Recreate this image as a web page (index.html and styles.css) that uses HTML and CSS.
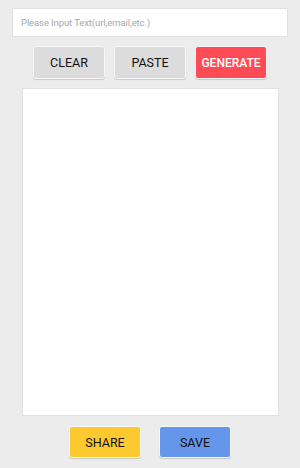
FILE: index.html
```html
<!DOCTYPE html>
<html>
<head>
    <meta charset="UTF-8">
    <title>QR Generator</title>
    <link rel="stylesheet" href="styles.css">
</head>
<body>
    <div id="app">
        <input id="text" type="text" placeholder="Please Input Text(url,email,etc.)">
        <div class="row top">
            <button class="btn gray">CLEAR</button>
            <button class="btn gray">PASTE</button>
            <button class="btn red">GENERATE</button>
        </div>
        <div id="result"></div>
        <div class="row bottom">
            <button class="btn yellow">SHARE</button>
            <button class="btn blue">SAVE</button>
        </div>
    </div>
</body>
</html>
```
FILE: styles.css
```css
body {
    margin: 0;
    background: #ececec;
    font-family: Roboto, "Noto Sans", sans-serif;
}

#app {
    width: 300px;
    height: 468px;
    display: flex;
    flex-direction: column;
    align-items: center;
    padding-top: 8px;
    box-sizing: border-box;
}

#text {
    width: 276px;
    height: 29px;
    box-sizing: border-box;
    border: 1px solid #e2e2e2;
    background: #fff;
    padding: 0 8px;
    font-family: Roboto, sans-serif;
    font-size: 9.5px;
    letter-spacing: -0.1px;
    color: #333;
    outline: none;
}

#text::placeholder {
    color: #a8a8a8;
}

.row {
    display: flex;
    justify-content: center;
}

.row.top {
    margin-top: 9px;
    gap: 9px;
}

.row.bottom {
    margin-top: 10px;
    gap: 18px;
}

.btn {
    width: 72px;
    height: 33px;
    border: 1px solid #f8f8f8;
    border-radius: 3px;
    box-shadow: 0 1px 1px rgba(0, 0, 0, 0.15);
    font-family: Roboto, sans-serif;
    font-size: 12.5px;
    color: #111;
    padding: 0;
}

.btn.gray {
    background: #dcdcdc;
}

.btn.red {
    background: #ff4b55;
    color: #fff;
    font-size: 12px;
    font-weight: 500;
}

.btn.yellow {
    background: #fdc92e;
}

.btn.blue {
    background: #6496ec;
}

#result {
    margin-top: 9px;
    width: 257px;
    height: 328px;
    background: #fff;
    box-sizing: border-box;
    border: 1px solid #e0e0e0;
}

.row.bottom .btn {
    height: 32px;
}
```
